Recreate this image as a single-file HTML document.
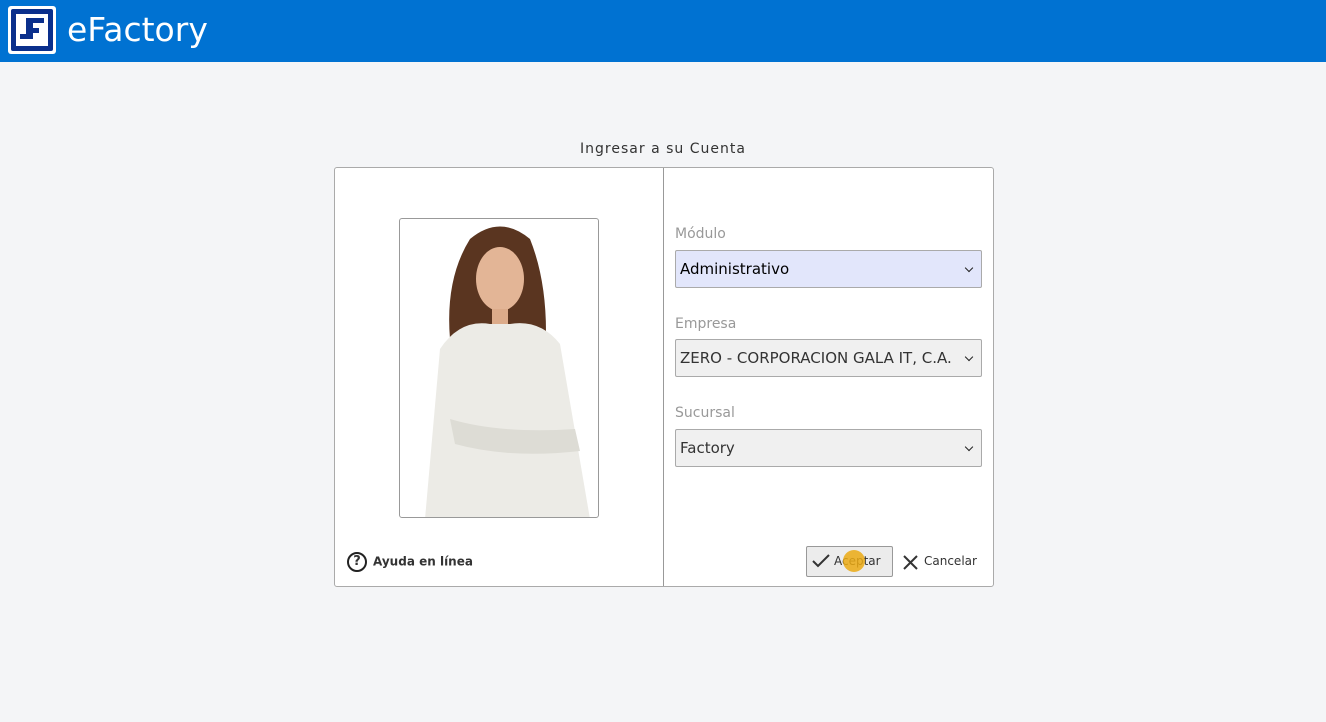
<!DOCTYPE html>
<html><head><meta charset="utf-8"><style>
*{box-sizing:border-box;margin:0;padding:0}
body{width:1326px;height:722px;background:#f4f5f7;font-family:"DejaVu Sans","Liberation Sans",sans-serif;position:relative;overflow:hidden}
.top{position:absolute;left:0;top:0;width:1326px;height:62px;background:#0072d2}
.logo{position:absolute;left:8px;top:6px}
.brand{position:absolute;left:67px;top:10px;color:#fff;font-size:33px}
.title{position:absolute;left:0;width:1326px;top:141px;text-align:center;font-size:14px;color:#333;letter-spacing:1px}
.box{position:absolute;left:334px;top:167px;width:660px;height:420px;background:#fff;border:1px solid #aaa;border-radius:3px}
.div{position:absolute;left:328px;top:0;width:1px;height:418px;background:#999}
.photo{position:absolute;left:64px;top:50px;width:200px;height:300px;border:1px solid #999;border-radius:3px;overflow:hidden;background:#fff}
.lbl{position:absolute;left:340px;font-size:14px;color:#999}
.sel{position:absolute;left:340px;width:307px;height:38px;border:1px solid #aaa;border-radius:2px;background:#f0f0f0;font-size:15px;color:#333;padding:9px 0 0 4px}
.sel:after{content:"";position:absolute;right:9px;top:14px;width:5px;height:5px;border-right:1.5px solid #222;border-bottom:1.5px solid #222;transform:rotate(45deg)}
.help{position:absolute;left:12px;top:384px;font-size:12px;font-weight:bold;color:#333}
.help i{display:inline-block;width:20px;height:20px;border:2px solid #222;border-radius:50%;text-align:center;font-style:normal;font-size:13px;line-height:16px;margin-right:6px;vertical-align:middle}
.btn{position:absolute;left:471px;top:378px;width:87px;height:31px;border:1px solid #999;border-radius:2px;background:#ececec;font-size:12px;color:#333;padding:7px 0 0 27px}
.cancel{position:absolute;left:566px;top:386px;font-size:12px;color:#333;padding-left:23px}
</style></head><body>
<div class="top"><svg class="logo" width="48" height="48" viewBox="0 0 48 48">
<rect width="48" height="48" rx="3" fill="#fff"/>
<rect x="3" y="3" width="42" height="42" rx="2" fill="#0a2f8c"/>
<rect x="8" y="8" width="32" height="32" fill="#fff"/>
<path d="M18 12h18v5H25v5h6v5h-6v6H12v-5h6z" fill="#0a2f8c"/>
</svg><div class="brand">eFactory</div></div>
<div class="title">Ingresar a su Cuenta</div>
<div class="box">
<div class="div"></div>
<div class="photo"><svg width="200" height="300" viewBox="0 0 200 300">
<path d="M70 20 Q100 -5 130 20 Q150 70 145 140 L160 180 L115 170 L85 170 L40 180 L50 120 Q45 60 70 20z" fill="#5a3520"/>
<ellipse cx="100" cy="60" rx="24" ry="32" fill="#e3b596"/>
<path d="M92 90h16v20H92z" fill="#dcab8a"/>
<path d="M40 130 Q60 100 90 105 L110 105 Q140 100 160 125 L190 300 L25 300z" fill="#ecebe6"/>
<path d="M50 200 Q100 215 175 210 L180 232 Q110 240 55 225z" fill="#dddcd5"/>
</svg></div>
<div class="help"><i>?</i>Ayuda en línea</div>
<div class="lbl" style="top:58px">Módulo</div>
<div class="sel" style="top:82px;background:#e2e6fb;color:#000">Administrativo</div>
<div class="lbl" style="top:148px">Empresa</div>
<div class="sel" style="top:171px">ZERO - CORPORACION GALA IT, C.A.</div>
<div class="lbl" style="top:237px">Sucursal</div>
<div class="sel" style="top:261px">Factory</div>
<div class="btn"><svg style="position:absolute;left:5px;top:7px" width="18" height="14"><path d="M1 7l5 5L17 1" stroke="#333" stroke-width="2" fill="none"/></svg>Aceptar
<div style="position:absolute;left:36px;top:3px;width:22px;height:22px;border-radius:50%;background:rgba(235,170,20,.85)"></div></div>
<div class="cancel"><svg style="position:absolute;left:2px;top:1px" width="15" height="15"><path d="M1 1l13 13M14 1L1 14" stroke="#333" stroke-width="2"/></svg>Cancelar</div>
</div>
</body></html>
